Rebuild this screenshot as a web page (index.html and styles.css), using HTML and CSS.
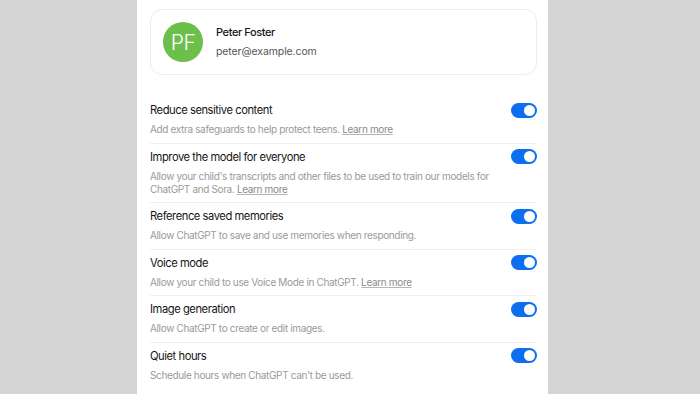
FILE: index.html
```html
<!DOCTYPE html>
<html lang="en">
<head>
<meta charset="UTF-8">
<meta name="viewport" content="width=device-width, initial-scale=1.0">
<title>Parental controls</title>
<link rel="stylesheet" href="styles.css">
</head>
<body>
<div class="panel">
  <div class="profile">
    <div class="avatar">PF</div>
    <div class="profile-info">
      <div class="profile-name">Peter Foster</div>
      <div class="profile-email">peter@example.com</div>
    </div>
  </div>

  <div class="settings">
    <div class="setting">
      <div class="setting-text">
        <div class="setting-title">Reduce sensitive content</div>
        <div class="setting-desc">Add extra safeguards to help protect teens. <a href="#">Learn more</a></div>
      </div>
      <span class="toggle"></span>
    </div>
    <div class="setting">
      <div class="setting-text">
        <div class="setting-title">Improve the model for everyone</div>
        <div class="setting-desc">Allow your child's transcripts and other files to be used to train our models for ChatGPT and Sora. <a href="#">Learn more</a></div>
      </div>
      <span class="toggle"></span>
    </div>
    <div class="setting">
      <div class="setting-text">
        <div class="setting-title">Reference saved memories</div>
        <div class="setting-desc">Allow ChatGPT to save and use memories when responding.</div>
      </div>
      <span class="toggle"></span>
    </div>
    <div class="setting">
      <div class="setting-text">
        <div class="setting-title">Voice mode</div>
        <div class="setting-desc">Allow your child to use Voice Mode in ChatGPT. <a href="#">Learn more</a></div>
      </div>
      <span class="toggle"></span>
    </div>
    <div class="setting">
      <div class="setting-text">
        <div class="setting-title">Image generation</div>
        <div class="setting-desc">Allow ChatGPT to create or edit images.</div>
      </div>
      <span class="toggle"></span>
    </div>
    <div class="setting">
      <div class="setting-text">
        <div class="setting-title">Quiet hours</div>
        <div class="setting-desc">Schedule hours when ChatGPT can't be used.</div>
      </div>
      <span class="toggle"></span>
    </div>
  </div>
</div>
</body>
</html>
```
FILE: styles.css
```css
body {
  margin: 0;
  background-color: #d4d4d4;
  font-family: Inter, "Liberation Sans", sans-serif;
  color: #161616;
}

.panel {
  width: 387px;
  height: 394px;
  margin-left: 137px;
  padding: 9px 11px 0 13px;
  background-color: white;
  overflow: hidden;
}

.profile {
  display: flex;
  align-items: center;
  gap: 13px;
  height: 64px;
  padding-left: 12px;
  border: 1px solid #ececec;
  border-radius: 12px;
}

.avatar {
  width: 40px;
  height: 40px;
  border-radius: 50%;
  background-color: #6cbf4b;
  color: white;
  font-size: 21px;
  font-weight: 300;
  display: flex;
  align-items: center;
  justify-content: center;
  letter-spacing: -0.5px;
}

.profile-name {
  font-size: 11px;
  line-height: 16px;
  font-weight: 500;
  letter-spacing: -0.4px;
}

.profile-email {
  font-size: 10.5px;
  line-height: 16px;
  color: #555;
  margin-top: 4px;
  letter-spacing: -0.1px;
}

.settings {
  margin-top: 22px;
}

.setting {
  display: flex;
  justify-content: space-between;
  align-items: flex-start;
  padding: 4px 0 6.5px;
  border-bottom: 1px solid #efefef;
}

.setting:last-child {
  border-bottom: none;
}

.setting-title {
  font-size: 11.2px;
  line-height: 18px;
  letter-spacing: -0.45px;
}

.setting-desc {
  margin-top: 4px;
  font-size: 10px;
  line-height: 13px;
  color: #9a9a9a;
  letter-spacing: -0.35px;
  padding-right: 20px;
}

.setting-desc a {
  color: #8a8a8a;
  text-decoration: underline;
  text-decoration-color: #b5b5b5;
}

.toggle {
  position: relative;
  flex-shrink: 0;
  width: 26px;
  height: 15px;
  margin-top: 1.5px;
  border-radius: 8px;
  background-color: #0d6ff0;
}

.toggle::after {
  content: "";
  position: absolute;
  top: 2px;
  right: 2px;
  width: 11px;
  height: 11px;
  border-radius: 50%;
  background-color: white;
}
```
